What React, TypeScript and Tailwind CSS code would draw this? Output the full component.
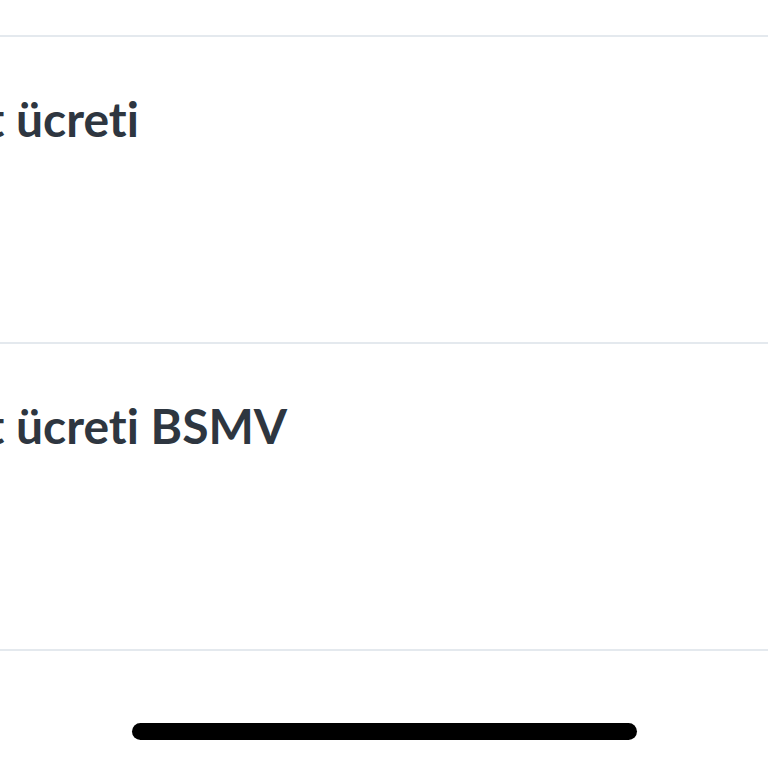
export default function App() {
  const rows = ['Hizmet ücreti', 'Hizmet ücreti BSMV']

  return (
    <div className="w-[768px] h-[768px] bg-white overflow-hidden flex flex-col" style={{ fontFamily: 'Lato, "Noto Sans", sans-serif' }}>
      <div className="h-[35px] shrink-0" />
      {rows.map((label) => (
        <div key={label} className="h-[307px] shrink-0 border-t-2 border-[#e4e9ee]">
          <div className="pt-[54px] ml-[-150px] whitespace-nowrap text-[48px] leading-[56px] font-bold text-[#2e3640] [font-variant-ligatures:none]">
            {label}
          </div>
        </div>
      ))}
      <div className="border-t-2 border-[#e4e9ee] flex-1 flex justify-center pt-[72px]">
        <div className="w-[505px] h-[17px] rounded-full bg-black" />
      </div>
    </div>
  )
}
